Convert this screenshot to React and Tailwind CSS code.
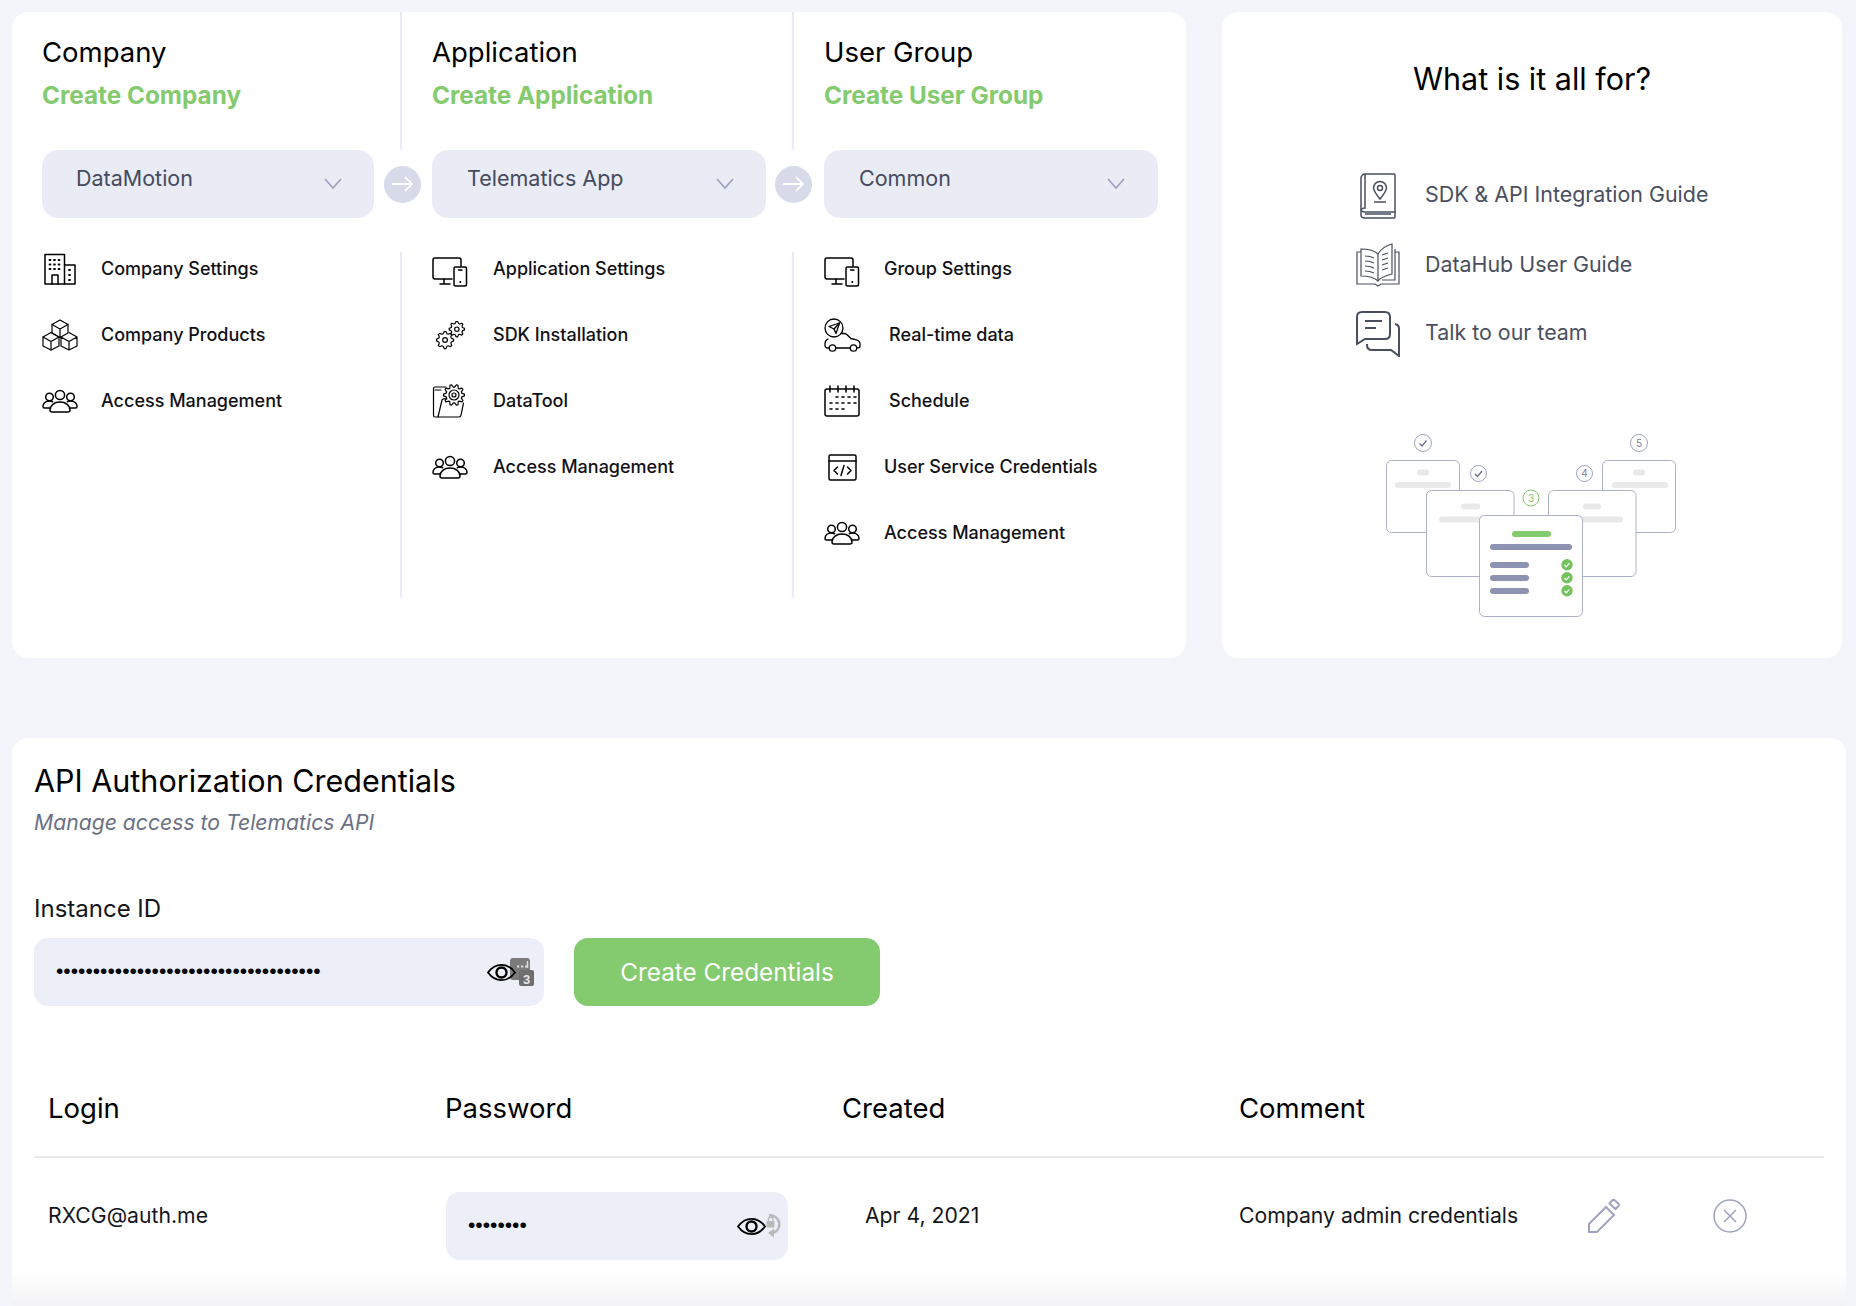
import React from "react";

const FONT = "font-['Inter','Liberation_Sans',sans-serif]";

function gearPath(cx, cy, r, teeth = 8) {
  const pts = [];
  const steps = teeth * 4;
  for (let i = 0; i < steps; i++) {
    const a = (i / steps) * Math.PI * 2 - Math.PI / steps;
    const rad = i % 4 === 0 || i % 4 === 1 ? r : r * 0.76;
    pts.push(`${(cx + rad * Math.cos(a)).toFixed(2)} ${(cy + rad * Math.sin(a)).toFixed(2)}`);
  }
  return `M${pts.join("L")}Z`;
}

const stroke = { fill: "none", stroke: "currentColor", strokeWidth: 1.5, strokeLinecap: "round", strokeLinejoin: "round" };

function BuildingIcon() {
  return (
    <svg width="36" height="32" viewBox="0 0 36 32" {...stroke} className="text-black">
      <path d="M3 1.500h19.500v29.500H3z" />
      <path d="M22.500 12H33v19H22.500" />
      <path d="M10 31v-9h6v9" />
      <path d="M7.500 7h1M12 7h1M16.500 7h1M7.500 11.500h1M12 11.500h1M16.500 11.500h1M7.500 16h1M12 16h1M16.500 16h1M27 17h1M27 22h1M27 27h1" strokeWidth="1.800" />
    </svg>
  );
}

function CubesIcon() {
  return (
    <svg width="36" height="32" viewBox="0 0 36 32" {...stroke} strokeWidth="1.200" className="text-black">
      <path d="M18 1l8 4.500v8.500l-8 4.500-8-4.500V5.500z" />
      <path d="M10 5.500l8 4.500 8-4.500M18 10v8.500" />
      <path d="M9 13.500l8 4.500v9l-8 4-8-4v-9z" />
      <path d="M1 18l8 4.500 8-4.500M9 22.500V31" />
      <path d="M27 13.500l8 4.500v9l-8 4-8-4v-9M19 18l8 4.500 8-4.500M27 22.500V31" />
    </svg>
  );
}

function PeopleIcon() {
  return (
    <svg width="36" height="24" viewBox="0 0 36 24" {...stroke} className="text-black">
      <circle cx="18" cy="6" r="4.600" />
      <circle cx="7.500" cy="8" r="3.800" />
      <circle cx="28.500" cy="8" r="3.800" />
      <path d="M10 23c-1.500 0-2-1-2-2 0-4.500 4-8 10-8s10 3.500 10 8c0 1-.5 2-2 2z" />
      <path d="M8 19H2.500c-1 0-1.500-.7-1.500-1.500C1 14.500 3.500 12 7.500 12c1.200 0 2.300.3 3.200.7M28 19h5.500c1 0 1.500-.7 1.500-1.500 0-3-2.500-5.500-6.500-5.500-1.200 0-2.300.3-3.200.7" />
    </svg>
  );
}

function DevicesIcon() {
  return (
    <svg width="36" height="30" viewBox="0 0 36 30" {...stroke} className="mt-[6px] text-black">
      <path d="M20 22H3c-1.200 0-2-.8-2-2V3c0-1.200.8-2 2-2h24c1.200 0 2 .8 2 2v6" />
      <path d="M12 22v5M8 27h10" />
      <rect x="22" y="10" width="12.500" height="19" rx="1.500" />
      <path d="M26.500 13h3.500" />
      <path d="M28.200 25h.2" strokeWidth="2" />
    </svg>
  );
}

function GearsIcon() {
  return (
    <svg width="31" height="29" viewBox="0 0 34 32" {...stroke} strokeWidth="1.300" className="ml-[3px] text-black">
      <path d={gearPath(11, 21, 9.500)} />
      <circle cx="11" cy="21" r="2.600" />
      <path d={gearPath(24, 9, 8.500)} />
      <circle cx="24" cy="9" r="2.400" />
    </svg>
  );
}

function FolderGearIcon() {
  return (
    <svg width="34" height="34" viewBox="0 0 34 34" {...stroke} strokeWidth="1.200" className="text-black">
      <path d="M14 3H3c-1 0-1.500.5-1.500 1.500v27c0 1 .5 1.500 1.500 1.500h24c1.200 0 1.800-.8 2-1.800l2.500-12" />
      <path d="M6 33l4-17c.2-.8.8-1.200 1.500-1.200H15M3 6h6" />
      <path d={gearPath(22, 11, 10.500, 10)} />
      <circle cx="22" cy="11" r="5" />
      <circle cx="22" cy="11" r="2" />
    </svg>
  );
}

function CarIcon() {
  return (
    <svg width="37" height="34" viewBox="0 0 37 34" {...stroke} strokeWidth="1.300" className="text-black">
      <circle cx="10" cy="10" r="9" />
      <path d="M5 8.500l10.500-3.500-3.500 10.500-2-4.500z" />
      <path d="M10 11l5.500-6" />
      <path d="M17.500 15.500H20c1.500 0 2.500.6 3.400 1.500l3.500 3.500 5.500 1.400c2 .5 3.600 2 3.600 4v2c0 1.100-.9 2-2 2h-1M26 30H12M5 30H3.500C2 30 1 29 1 27.500v-2c0-2 1-3.500 3-4.500" />
      <circle cx="8.500" cy="30" r="3.200" />
      <circle cx="29.500" cy="30" r="3.200" />
    </svg>
  );
}

function CalendarIcon() {
  return (
    <svg width="36" height="32" viewBox="0 0 36 32" {...stroke} className="text-black">
      <path d="M6 4H3C1.800 4 1 4.800 1 6v23c0 1.200.8 2 2 2h30c1.200 0 2-.8 2-2V6c0-1.200-.8-2-2-2h-3" />
      <path d="M6 1v6M14 1v6M22 1v6M30 1v6M6 4h24" />
      <path d="M12 12h2M18 12h2M24 12h2M30 12h2M6 18h2M12 18h2M18 18h2M24 18h2M30 18h2M6 24h2M12 24h2M18 24h2" strokeWidth="1.600" />
    </svg>
  );
}

function CodeIcon() {
  return (
    <svg width="29" height="27" viewBox="0 0 29 27" {...stroke} className="text-black">
      <rect x="1" y="1" width="27" height="25" rx="1.500" />
      <path d="M1 7h27" />
      <path d="M9.500 13l-3.500 3.500 3.500 3.500M19.500 13l3.500 3.500-3.500 3.500M16 11.500l-3 10" />
    </svg>
  );
}

function Row({ icon, label, iconWidth = "w-[59px]" }) {
  return (
    <div className="flex h-[34px] items-center">
      <div className={`flex shrink-0 items-center ${iconWidth}`}>{icon}</div>
      <span className="-mt-[2px] text-[18px] font-medium text-[#111116]">{label}</span>
    </div>
  );
}

function Heading({ title, action, className }) {
  return (
    <div className={`h-[138px] pl-[30px] pt-[24px] ${className}`}>
      <div className="h-[32px] text-[27.500px] leading-[32px] font-normal text-black">{title}</div>
      <div className="mt-[12px] h-[30px] text-[24.300px] leading-[30px] font-bold text-[#84ca6e]">{action}</div>
    </div>
  );
}

function Dropdown({ label, className }) {
  return (
    <div className={`flex h-[68px] items-start justify-between rounded-[16px] bg-[#e9ecf5] ${className}`}>
      <span className="mt-[14px] text-[21.500px] leading-[28px] text-[#454a5e]">{label}</span>
      <svg width="18" height="11" viewBox="0 0 18 11" fill="none" stroke="#9aa0bf" strokeWidth="1.600" className="mt-[28px]">
        <path d="M1 1l8 9 8-9" />
      </svg>
    </div>
  );
}

function NextArrow() {
  return (
    <div className="flex size-[37px] shrink-0 items-center justify-center rounded-full bg-[#d7dbe9]">
      <svg width="22" height="16" viewBox="0 0 22 16" fill="none" stroke="#fff" strokeWidth="1.800">
        <path d="M0 8h20M13 1l7 7-7 7" />
      </svg>
    </div>
  );
}

function Eye() {
  return (
    <svg width="29" height="19" viewBox="0 0 29 19" fill="none" stroke="#000" strokeWidth="1.800" className="relative z-10 shrink-0">
      <path d="M1 9.500C5 4 9.500 1.800 14.500 1.800S24 4 28 9.500c-4 5.500-8.500 7.700-13.500 7.700S5 15 1 9.500z" />
      <circle cx="14.500" cy="9.500" r="5" strokeWidth="2.400" />
    </svg>
  );
}

function PassBadge() {
  return (
    <svg width="24" height="28" viewBox="0 0 24 28" className="-ml-[6px] shrink-0">
      <rect x="0" y="0" width="20" height="22" rx="3" fill="#7b7b7b" />
      <rect x="9" y="12" width="15" height="16" rx="2" fill="#6e6e6e" />
      <path d="M7 8.500h2.200M11 8.500h2.200M15 8.500h2.200" stroke="#ddd" strokeWidth="2" />
      <path d="M17.500 3v7" stroke="#ddd" strokeWidth="1.500" />
      <text x="16.500" y="25.500" textAnchor="middle" fontSize="13" fontWeight="700" fill="#e6e6e6" fontFamily="Liberation Sans">3</text>
    </svg>
  );
}

function ResetBadge() {
  return (
    <svg width="20" height="26" viewBox="0 0 20 26" fill="none" className="-ml-[4px] shrink-0">
      <path d="M7 2.500a9 9 0 0 1 4 17.500" stroke="#b9b9b9" strokeWidth="2.600" />
      <path d="M12 15.500v9l-6-4.500z" fill="#b9b9b9" />
      <rect x="4.500" y="8" width="8" height="6.500" rx="1" fill="#b9b9b9" />
      <path d="M6.300 8V6.300a2.300 2.300 0 0 1 4.600 0V8" stroke="#b9b9b9" strokeWidth="1.300" />
    </svg>
  );
}

function StepBadge({ cx, cy, r = 8, label, green }) {
  const color = green ? "#84ca6e" : "#9ea3bf";
  return (
    <g>
      <circle cx={cx} cy={cy} r={r} fill="#fff" stroke={color} strokeWidth="1" />
      {label ? (
        <text x={cx} y={cy + 3.500} textAnchor="middle" fontSize="10" fill={green ? "#84ca6e" : "#7d829e"} fontFamily="Inter">{label}</text>
      ) : (
        <path d={`M${cx - 3.500} ${cy + 0.500}l2.500 2.500 4.500-5.500`} fill="none" stroke="#6b7090" strokeWidth="1.400" />
      )}
    </g>
  );
}

function Steps() {
  const sheet = { fill: "#fff", stroke: "#adb1c8", strokeWidth: 1 };
  const bar = "#e9e9ea";
  const ink = "#8d93b0";
  return (
    <svg width="340" height="210" viewBox="0 0 340 210" className="ml-[138px] shrink-0">
      <rect x="26.500" y="40.500" width="73" height="72" rx="5" {...sheet} />
      <rect x="57" y="49.500" width="12" height="6" rx="3" fill={bar} />
      <rect x="35" y="62" width="56" height="6" rx="3" fill={bar} />
      <rect x="242.500" y="40.500" width="73" height="72" rx="5" {...sheet} />
      <rect x="273" y="49.500" width="12" height="6" rx="3" fill={bar} />
      <rect x="252" y="62" width="56" height="6" rx="3" fill={bar} />
      <rect x="66.500" y="70.500" width="87.500" height="86" rx="5" {...sheet} />
      <rect x="101" y="83.500" width="19" height="6" rx="3" fill={bar} />
      <rect x="79" y="96.500" width="60" height="6" rx="3" fill={bar} />
      <rect x="188.500" y="70.500" width="87.500" height="86" rx="5" {...sheet} />
      <rect x="223" y="83.500" width="18" height="6" rx="3" fill={bar} />
      <rect x="196" y="96.500" width="67" height="6" rx="3" fill={bar} />
      <rect x="119.500" y="95.500" width="103" height="101" rx="5" {...sheet} />
      <rect x="152" y="111" width="39" height="6" rx="3" fill="#84ca6e" />
      <rect x="130" y="124" width="82" height="6" rx="3" fill={ink} />
      {[142, 155, 168].map((y) => (
        <g key={y}>
          <rect x="130" y={y} width="39" height="6" rx="3" fill={ink} />
          <circle cx="207" cy={y + 2.800} r="5.700" fill="#74c25e" />
          <path d={`M204.500 ${y + 3}l1.800 1.800 3-3.500`} fill="none" stroke="#fff" strokeWidth="1.300" />
        </g>
      ))}
      <StepBadge cx={63} cy={23} r={8.500} />
      <StepBadge cx={118.500} cy={53.500} />
      <StepBadge cx={171} cy={78} label="3" green />
      <StepBadge cx={224.500} cy={53.500} label="4" />
      <StepBadge cx={279} cy={23} r={8.500} label="5" />
    </svg>
  );
}

function GuideBookIcon() {
  return (
    <svg width="36" height="46" viewBox="0 0 36 46" fill="none" stroke="#4a4f60" strokeWidth="1.500">
      <path d="M5 1h29c.8 0 1 .4 1 1v37H5c-2 0-4-.8-4-3V5c0-2.200 2-4 4-4z" />
      <path d="M5 1v34c-2 0-4 .8-4 3v4c0 2.200 2 3 4 3h29c.8 0 1-.4 1-1v-5M5 41h26" />
      <path d="M20 26c-4-5-6.500-8-6.500-11a6.500 6.500 0 0 1 13 0c0 3-2.500 6-6.500 11z" />
      <circle cx="20" cy="15" r="2.500" />
      <path d="M14 29h12" />
    </svg>
  );
}

function OpenBookIcon() {
  return (
    <svg width="44" height="44" viewBox="0 0 44 44" fill="none" stroke="#4a4f60" strokeWidth="1.200">
      <path d="M22 38C18 34 12 33 5 33V6c7 0 13 1 17 5 3-5 8-8.500 14-10v30c-6 1.500-11 3-14 7zM22 11v27" />
      <path d="M5 9H1v32h18l3 2 3-2h18V9h-4M39 6v31H26" />
      <path d="M9 13c3 0 6 .5 9 2M9 18c3 0 6 .5 9 2M9 23c3 0 6 .5 9 2M9 28c3 0 6 .5 9 2M26 12l6-2M26 17l6-2M26 22l6-2M26 27l6-2" />
    </svg>
  );
}

function ChatIcon() {
  return (
    <svg width="44" height="46" viewBox="0 0 44 46" fill="none" stroke="#4a4f60" strokeWidth="2">
      <path d="M6 1h23c3 0 5 2 5 5v17c0 3-2 5-5 5H9l-8 5V6c0-3 2-5 5-5z" />
      <path d="M9 10h17M9 17h11" />
      <path d="M39 13c2.500.5 4 2 4 4.500V45l-8-6H16c-3 0-5-2-5-5v-1" />
    </svg>
  );
}

function GuideLink({ icon, label, textClass = "-mt-[3px]" }) {
  return (
    <div className="flex h-[46px] items-center">
      <div className="flex w-[69px] shrink-0 justify-start">{icon}</div>
      <span className={`text-[21.400px] text-[#4a4f60] ${textClass}`}>{label}</span>
    </div>
  );
}

export default function App() {
  return (
    <div className={`${FONT} h-[1306px] w-[1856px] overflow-hidden bg-[#f3f5fa] pt-[12px] pl-[12px]`}>
      <div className="flex gap-[36px]">
        {/* Setup card */}
        <div className="h-[646px] w-[1174px] rounded-[16px] bg-white">
          <div className="flex">
            <Heading title="Company" action="Create Company" className="w-[390px] border-r-2 border-[#e9ecf6]" />
            <Heading title="Application" action="Create Application" className="w-[392px] border-r-2 border-[#e9ecf6]" />
            <Heading title="User Group" action="Create User Group" className="flex-1" />
          </div>
          <div className="flex items-center pl-[30px]">
            <Dropdown label="DataMotion" className="w-[332px] pl-[34px] pr-[32px]" />
            <div className="ml-[10px] mr-[11px]"><NextArrow /></div>
            <Dropdown label="Telematics App" className="w-[334px] pl-[35px] pr-[32px]" />
            <div className="ml-[9px] mr-[12px]"><NextArrow /></div>
            <Dropdown label="Common" className="w-[334px] pl-[35px] pr-[33px]" />
          </div>
          <div className="mt-[34px] flex h-[346px]">
            <div className="flex w-[390px] flex-col gap-[32px] border-r-2 border-[#e9ecf6] pl-[30px]">
              <Row icon={<BuildingIcon />} label="Company Settings" />
              <Row icon={<CubesIcon />} label="Company Products" />
              <Row icon={<PeopleIcon />} label="Access Management" />
            </div>
            <div className="flex w-[392px] flex-col gap-[32px] border-r-2 border-[#e9ecf6] pl-[30px]">
              <Row icon={<DevicesIcon />} label="Application Settings" iconWidth="w-[61px]" />
              <Row icon={<GearsIcon />} label="SDK Installation" iconWidth="w-[61px]" />
              <Row icon={<FolderGearIcon />} label="DataTool" iconWidth="w-[61px]" />
              <Row icon={<PeopleIcon />} label="Access Management" iconWidth="w-[61px]" />
            </div>
            <div className="flex flex-1 flex-col gap-[32px] pl-[30px]">
              <Row icon={<DevicesIcon />} label="Group Settings" iconWidth="w-[60px]" />
              <Row icon={<CarIcon />} label="Real-time data" iconWidth="w-[65px]" />
              <Row icon={<CalendarIcon />} label="Schedule" iconWidth="w-[65px]" />
              <Row icon={<div className="pl-[4px]"><CodeIcon /></div>} label="User Service Credentials" iconWidth="w-[60px]" />
              <Row icon={<PeopleIcon />} label="Access Management" iconWidth="w-[60px]" />
            </div>
          </div>
        </div>

        {/* Help card */}
        <div className="flex h-[646px] w-[620px] flex-col rounded-[16px] bg-white pt-[49px]">
          <h2 className="h-[36px] text-center text-[30.500px] leading-[36px] font-normal text-black">What is it all for?</h2>
          <div className="mt-[76px] flex flex-col gap-[23px] pl-[134px]">
            <GuideLink icon={<div className="pl-[4px]"><GuideBookIcon /></div>} label="SDK & API Integration Guide" />
            <GuideLink icon={<OpenBookIcon />} label="DataHub User Guide" textClass="-mt-[1px]" />
            <GuideLink icon={<ChatIcon />} label="Talk to our team" />
          </div>
          <div className="mt-[63px] flex"><Steps /></div>
        </div>
      </div>

      {/* Credentials card */}
      <div className="mt-[80px] flex h-[568px] w-[1834px] flex-col rounded-t-[16px] bg-white">
        <div className="px-[22px] pt-[24px]">
          <h1 className="h-[38px] text-[30.500px] leading-[38px] font-normal text-black">API Authorization Credentials</h1>
          <p className="mt-[8px] h-[28px] text-[21.200px] leading-[28px] italic text-[#6b7085]">Manage access to Telematics API</p>
          <div className="mt-[58px] h-[30px] text-[24px] leading-[30px] font-normal text-[#15151c]">Instance ID</div>
          <div className="mt-[14px] flex gap-[30px]">
            <div className="flex h-[68px] w-[510px] items-center justify-between rounded-[14px] bg-[#eceff8] pl-[22px] pr-[10px]">
              <span className="-mt-[4px] font-['Liberation_Sans',sans-serif] text-[21px] leading-none text-black">{"•".repeat(36)}</span>
              <div className="flex items-center">
                <Eye />
                <PassBadge />
              </div>
            </div>
            <button className="h-[68px] w-[306px] rounded-[14px] bg-[#84ca6e] text-[24.300px] font-normal text-white">Create Credentials</button>
          </div>

          <div className="mt-[72px] grid h-[80px] grid-cols-[397px_397px_397px_1fr] border-b-2 border-[#e8eaf0] pl-[14px] pt-[13px] text-[27.500px] leading-[34px] font-normal text-black">
            <div>Login</div>
            <div>Password</div>
            <div>Created</div>
            <div>Comment</div>
          </div>

          <div className="mt-[34px] grid grid-cols-[397px_397px_397px_1fr] pl-[14px] text-[21.200px] text-[#15151c]">
            <div className="leading-[46px]">RXCG@auth.me</div>
            <div>
              <div className="ml-[1px] flex h-[68px] w-[342px] items-center justify-between rounded-[14px] bg-[#eceff8] pl-[22px] pr-[6px]">
                <span className="-mt-[4px] font-['Liberation_Sans',sans-serif] text-[21px] leading-none text-black">{"•".repeat(8)}</span>
                <div className="flex items-center">
                  <Eye />
                  <ResetBadge />
                </div>
              </div>
            </div>
            <div className="pl-[23px] leading-[46px]">Apr 4, 2021</div>
            <div className="flex items-start">
              <span className="w-[348px] leading-[46px]">Company admin credentials</span>
              <svg width="35" height="36" viewBox="0 0 35 36" fill="none" stroke="#9ea3bf" strokeWidth="2" className="mt-[6px]">
                <path d="M19 9L2 26v8h8l17-17z" />
                <path d="M25 2.500l-2.500 3 6 5.500 3-3c.7-.8.7-1.500 0-2.200L28 2.500c-1-.8-2-.8-3 0z" />
              </svg>
              <svg width="34" height="34" viewBox="0 0 34 34" fill="none" stroke="#9ea3bf" className="mt-[7px] ml-[91px]">
                <circle cx="17" cy="17" r="16" strokeWidth="1.500" />
                <path d="M11 11l12 12M23 11L11 23" strokeWidth="1.500" />
              </svg>
            </div>
          </div>
        </div>
        <div className="mt-[10px] flex-1 bg-gradient-to-b from-white to-[#f3f3f5]" />
      </div>
    </div>
  );
}
